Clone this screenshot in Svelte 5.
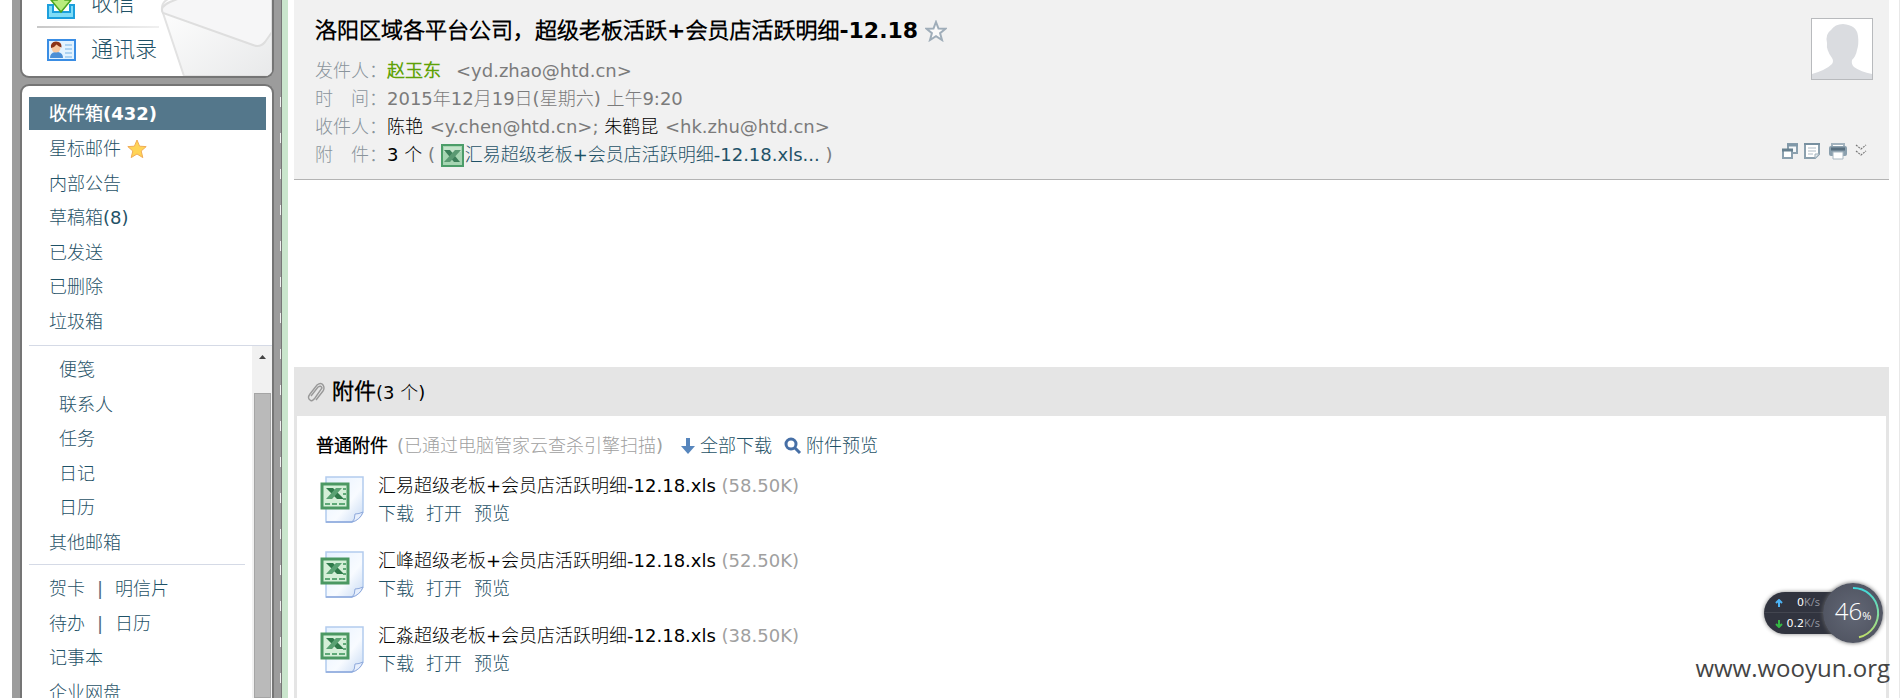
<script>
    let folders = ['星标邮件', '内部公告', '草稿箱(8)', '已发送', '已删除', '垃圾箱'];
    let subFolders = ['便笺', '联系人', '任务', '日记', '日历'];
    let tools = [['贺卡', '明信片'], ['待办', '日历'], ['记事本'], ['企业网盘']];
    let files = [
        { name: '汇易超级老板+会员店活跃明细-12.18.xls', size: '58.50K' },
        { name: '汇峰超级老板+会员店活跃明细-12.18.xls', size: '52.50K' },
        { name: '汇淼超级老板+会员店活跃明细-12.18.xls', size: '38.50K' }
    ];
</script>

<div class="page">
    <aside class="sidebar">
        <nav class="panel quick">
            <svg class="envelope" width="116" height="78" viewBox="0 0 116 78" aria-hidden="true">
                <defs>
                    <linearGradient id="paper" x1="0" y1="0" x2="1" y2="1">
                        <stop offset="0" stop-color="#fff" />
                        <stop offset="1" stop-color="#e8e9ea" />
                    </linearGradient>
                </defs>
                <path d="M6 12 L28 78 H116 V0 H14 Q5 4 6 12Z" fill="url(#paper)" stroke="#e2e2e2" stroke-width="2" />
                <path d="M7 15 Q3 9 14 4 L24 0 H116 V34 L109 44 Q104 50 97 47Z" fill="#f6f6f7" stroke="#dedede" stroke-width="2" />
            </svg>
            <a href="#receive">
                <svg width="30" height="34" viewBox="0 0 30 34" aria-hidden="true">
                    <path d="M2 18h5v7h17v-7h4v13H2z" fill="#7fdcf7" stroke="#1c9fdc" stroke-width="2" />
                    <path d="M11 3h8v10h6L15 25 5 13h6z" fill="#b9ec7c" stroke="#4ba51f" stroke-width="1.5" />
                </svg>
                <span>收信</span>
            </a>
            <div class="fade-line"></div>
            <a href="#contacts">
                <svg width="30" height="24" viewBox="0 0 30 24" aria-hidden="true">
                    <rect x="2" y="2" width="27" height="20" fill="#e3f3ff" stroke="#3a8de4" stroke-width="2" />
                    <path d="M4 20q0-5 5-6h3q5 1 5 6z" fill="#4b8fd6" />
                    <circle cx="10" cy="10" r="4.5" fill="#f8c9a0" />
                    <path d="M5 10q-1-6 5-6.500q6 0 5.500 6q-3-1-5-3q-2 3-5.500 3.500z" fill="#8c3417" />
                    <path d="M19 7h7M19 11h7M19 15h7M19 19h7" stroke="#9cc9ee" stroke-width="1.500" />
                </svg>
                <span>通讯录</span>
            </a>
        </nav>

        <nav class="panel folders">
            <a class="inbox" href="#inbox">收件箱(432)</a>
            <ul>
                {#each folders as folder, i}
                    <li>
                        <a href="#folder">{folder}</a>
                        {#if i == 0}
                            <svg width="20" height="20" viewBox="0 0 20 20" aria-hidden="true">
                                <path d="M10 1l2.600 6.200 6.600.4-5 4.400 1.600 6.600L10 15 4.200 18.600l1.600-6.600-5-4.400 6.600-.4z" fill="#ffd456" stroke="#f0ac56" />
                            </svg>
                        {/if}
                    </li>
                {/each}
            </ul>
            <div class="scroller">
                <div class="scroll-content">
                    <ul>
                        {#each subFolders as folder}
                            <li class="indent"><a href="#folder">{folder}</a></li>
                        {/each}
                        <li><a href="#other">其他邮箱</a></li>
                    </ul>
                    <ul class="tools">
                        {#each tools as row}
                            <li>
                                {#each row as tool, i}
                                    {#if i > 0}<span class="bar">|</span>{/if}<a href="#tool">{tool}</a>
                                {/each}
                            </li>
                        {/each}
                    </ul>
                </div>
                <div class="scrollbar">
                    <svg width="7" height="4" viewBox="0 0 7 4" aria-hidden="true"><path d="M0 4L3.500 0 7 4z" fill="#444" /></svg>
                    <div class="thumb"></div>
                </div>
            </div>
        </nav>
    </aside>

    <main>
        <header>
            <div class="info">
                <h1>
                    洛阳区域各平台公司，超级老板活跃+会员店活跃明细-12.18
                    <svg width="22" height="22" viewBox="0 0 22 22" aria-hidden="true">
                        <path d="M11 2l2.500 6.500 7 .3-5.400 4.400 1.900 6.800L11 16.200 5 20l1.900-6.800L1.500 8.800l7-.3z" fill="#fafafa" stroke="#9fadb9" stroke-width="2" />
                    </svg>
                </h1>
                <dl>
                    <dt>发件人：</dt>
                    <dd><b class="sender">赵玉东</b>&lt;yd.zhao@htd.cn&gt;</dd>
                    <dt>时　间：</dt>
                    <dd>2015年12月19日(星期六) 上午9:20</dd>
                    <dt>收件人：</dt>
                    <dd><span class="dark name">陈艳</span> &lt;y.chen@htd.cn&gt;; <span class="dark name">朱鹤昆</span> &lt;hk.zhu@htd.cn&gt;</dd>
                    <dt>附　件：</dt>
                    <dd>
                        <span class="dark">3 个</span> (
                        <a class="attach" href="#attachments"><svg width="24" height="24" viewBox="0 0 24 24" aria-hidden="true">
                            <rect x="1" y="1" width="21" height="21" fill="#a6d5b2" stroke="#4c9d69" stroke-width="2" />
                            <path d="M3 3h17v5H3z" fill="#c3e3ca" />
                            <path d="M3 6h6l10 12h-6z" fill="#3d7f5a" />
                            <path d="M14 6h6L9 18H3z" fill="#5b9a73" />
                        </svg>汇易超级老板+会员店活跃明细-12.18.xls...</a> )
                    </dd>
                </dl>
            </div>
            <div class="side">
                <svg class="avatar" viewBox="0 0 60 60" role="img" aria-label="头像">
                    <path d="M0 60v-5q14-4 20-10 2-3 0-6-6-8-5-15-2-9 4-13 4-6 12-6 14 1 15 12 1 8-1 14-1 6-5 10-1 4 2 7 7 5 18 7v5z" fill="#dadce0" />
                </svg>
                <div class="actions">
                    <button aria-label="新窗口打开">
                        <svg width="18" height="18" viewBox="0 0 18 18">
                            <path d="M7 2h9v9H7z" fill="#f4f7f9" stroke="#8ba0ae" stroke-width="2" />
                            <path d="M6 3h11" stroke="#8098a8" stroke-width="3" />
                            <path d="M2 8h9v8H2z" fill="#fff" stroke="#8ba0ae" stroke-width="2" />
                            <path d="M1 8h11" stroke="#67808f" stroke-width="3" />
                        </svg>
                    </button>
                    <button aria-label="添加备注">
                        <svg width="18" height="18" viewBox="0 0 18 18">
                            <path d="M2 2h14v10l-4 4H2z" fill="#fff" stroke="#8ba0ae" stroke-width="2" />
                            <path d="M1 2h16" stroke="#7890a0" stroke-width="2" />
                            <path d="M5 6h8M5 9h8M5 12h5" stroke="#aebbc5" />
                            <path d="M12 16v-4h4" fill="#e5ebef" stroke="#a0b0bb" />
                        </svg>
                    </button>
                    <button class="print" aria-label="打印">
                        <svg width="20" height="18" viewBox="0 0 20 18">
                            <path d="M4 4V2h12v2" fill="#fff" stroke="#a3b3be" stroke-width="2" />
                            <rect x="1" y="4" width="18" height="10" rx="2" fill="#8ba0ae" />
                            <path d="M3 7h14" stroke="#586f7f" stroke-width="3" />
                            <path d="M5 10h10v7H5z" fill="#fff" stroke="#a8b7c1" />
                        </svg>
                    </button>
                    <button class="more" aria-label="更多">
                        <svg width="12" height="14" viewBox="0 0 12 14">
                            <path d="M1 1l5 4 5-4M1 7l5 4 5-4" fill="none" stroke="#777" stroke-width="1.200" stroke-dasharray="2 1" />
                        </svg>
                    </button>
                </div>
            </div>
        </header>

        <section>
            <h2>
                <svg width="18" height="22" viewBox="0 0 18 22" aria-hidden="true">
                    <path d="M4 14L11 5q3-2 4 1l-7 10q-3 4-5 2-3-2 0-6L10 3q4-3 6 0 2 3 0 6l-7 9" fill="none" stroke="#999" stroke-width="1.400" />
                </svg>
                <span>附件<small>(3 个)</small></span>
            </h2>
            <div class="body">
                <div class="summary">
                    <b>普通附件</b>
                    <span class="scan">(已通过电脑管家云查杀引擎扫描)</span>
                    <a class="all" href="#download">
                        <svg width="16" height="18" viewBox="0 0 16 18" aria-hidden="true"><path d="M6 1h4v8h5l-7 8-7-8h5z" fill="#5786bd" /></svg>全部下载</a>
                    <a href="#preview">
                        <svg width="18" height="18" viewBox="0 0 18 18" aria-hidden="true">
                            <circle cx="7" cy="7" r="5" fill="none" stroke="#466fa6" stroke-width="3" />
                            <path d="M11 11l5 5" stroke="#466fa6" stroke-width="3" />
                        </svg>附件预览</a>
                </div>
                {#each files as file}
                    <div class="file">
                        <svg width="46" height="48" viewBox="0 0 46 48" aria-hidden="true">
                            <defs>
                                <linearGradient id="sheet" x1="0" y1="0" x2="1" y2="1">
                                    <stop offset="0" stop-color="#e6f1ff" />
                                    <stop offset=".6" stop-color="#f8fbff" />
                                    <stop offset="1" stop-color="#c6d9f3" />
                                </linearGradient>
                            </defs>
                            <path d="M7 1h37v35q-3 7-11 10H7z" fill="url(#sheet)" stroke="#b3cbee" stroke-width="1.500" />
                            <path d="M7 46h26q3-2 3-8 4 0 8-2-3 8-11 10z" fill="#e7effc" stroke="#8ea9dc" />
                            <rect x="3" y="8" width="26" height="24" fill="#d5efd8" stroke="#4b9862" stroke-width="3" />
                            <path d="M7 12h7l11 11h-7z" fill="#2f7a4a" />
                            <path d="M17 12h6L13 23H7z" fill="#5aa273" />
                            <path d="M24 13h3M24 18h3M24 23h3M6 28h5M13 28h5M20 28h6" stroke="#5fa977" stroke-width="2" />
                        </svg>
                        <div>
                            <p>{file.name} <span class="size">({file.size})</span></p>
                            <p class="links"><a href="#download">下载</a><a href="#open">打开</a><a href="#preview">预览</a></p>
                        </div>
                    </div>
                {/each}
            </div>
        </section>
    </main>

    <div class="monitor">
        <div class="speeds">
            <div class="speed">
                <svg width="8" height="8" viewBox="0 0 8 8" aria-hidden="true"><path d="M4 8V2M1 4l3-3 3 3" fill="none" stroke="#4db4f5" stroke-width="2" /></svg>
                <span>0<i>K/s</i></span>
            </div>
            <div class="speed">
                <svg width="8" height="8" viewBox="0 0 8 8" aria-hidden="true"><path d="M4 0v6M1 4l3 3 3-3" fill="none" stroke="#35b944" stroke-width="2" /></svg>
                <span>0.2<i>K/s</i></span>
            </div>
        </div>
        <div class="dial">
            <svg width="60" height="60" viewBox="0 0 60 60" aria-hidden="true">
                <defs>
                    <linearGradient id="arc" x1="0" y1="0" x2="0" y2="1">
                        <stop offset="0" stop-color="#3fd9dc" />
                        <stop offset="1" stop-color="#bfe06a" />
                    </linearGradient>
                </defs>
                <path d="M30 5A25 25 0 0 1 36 54.300" fill="none" stroke="url(#arc)" stroke-width="2" />
            </svg>
            <span>46<small>%</small></span>
        </div>
    </div>
    <div class="watermark">www.wooyun.org</div>
</div>

<style>
    :global(body) {
        margin: 0;
        background: #fff;
    }

    .page {
        position: relative;
        box-sizing: border-box;
        display: flex;
        height: 100vh;
        overflow: hidden;
        padding: 0 10px 0 12px;
        border-right: 1px solid #e8e8e8;
        font-family: "DejaVu Sans", "Noto Sans CJK SC Light", "Noto Sans CJK SC", sans-serif;
        font-size: 18px;
        line-height: 28px;
        color: #000;
    }

    a {
        color: #1f5267;
        text-decoration: none;
    }

    ul,
    dl,
    dd,
    p,
    h1,
    h2 {
        margin: 0;
        padding: 0;
        list-style: none;
    }

    svg {
        flex: none;
    }

    /* left column */
    .sidebar {
        flex: none;
        box-sizing: border-box;
        width: 276px;
        display: flex;
        flex-direction: column;
        gap: 6px;
        padding: 0 8px;
        border-right: 6px solid #cae6cd;
        background:
            repeating-linear-gradient(#eee 0 10px, #9c9c9c 10px 36px) 268px 97px / 1px 100% no-repeat,
            linear-gradient(#777, #777) 269px 0 / 1px 100% no-repeat,
            #9c9c9c;
    }

    .panel {
        box-sizing: border-box;
        border: 2px solid #757575;
        border-radius: 9px;
        background: #fff;
        overflow: hidden;
    }

    .quick {
        position: relative;
        flex: none;
        height: 78px;
        border-top: 0;
        border-radius: 0 0 9px 9px;
        display: flex;
        flex-direction: column;
        justify-content: flex-end;
        padding: 0 0 4px 24px;
    }

    .quick a {
        position: relative;
        flex: none;
        display: flex;
        align-items: center;
        gap: 15px;
        height: 44px;
        font-size: 22px;
    }

    .envelope {
        position: absolute;
        right: 0;
        bottom: 0;
    }

    .fade-line {
        position: relative;
        flex: none;
        width: 122px;
        height: 2px;
        margin-left: -9px;
        background: linear-gradient(90deg, #c8c8c8, #f0f0f0);
    }

    .folders {
        flex: 1;
        min-height: 0;
        display: flex;
        flex-direction: column;
        border-bottom: 0;
        border-radius: 9px 9px 0 0;
        padding: 11px 0 0 7px;
    }

    .inbox {
        flex: none;
        height: 33px;
        margin: 0 6px 0 0;
        padding-left: 20px;
        background: #54778b;
        color: #fff;
        font-weight: bold;
        line-height: 34px;
    }

    .folders ul {
        flex: none;
        display: grid;
        grid-auto-rows: 1fr;
        height: 207px;
        padding-top: 2px;
    }

    .folders li {
        display: flex;
        align-items: center;
        padding-left: 20px;
    }

    .folders li svg {
        margin-left: 6px;
    }

    .folders .indent {
        padding-left: 30px;
    }

    .scroller {
        flex: 1;
        min-height: 0;
        display: flex;
        gap: 7px;
        margin-top: 6px;
        border-top: 1px solid #d5dae6;
    }

    .scroll-content {
        flex: 1;
        overflow: hidden;
        padding-top: 5px;
    }

    .folders .tools {
        height: 138px;
        margin-top: 4px;
        padding-top: 7px;
        border-top: 1px solid #d5dae6;
    }

    .bar {
        padding: 0 12px;
        color: #4f6b80;
    }

    .scrollbar {
        display: flex;
        flex-direction: column;
        align-items: center;
        width: 20px;
        padding-top: 9px;
        background: #f1f1f1;
    }

    .thumb {
        flex: 1;
        width: 15px;
        margin-top: 34px;
        border: 1px solid #a5a5a5;
        background: #bababa;
    }

    /* message */
    main {
        flex: 1;
        min-width: 0;
        display: flex;
        flex-direction: column;
        padding-left: 6px;
    }

    header {
        display: flex;
        justify-content: space-between;
        padding: 6px 16px 10px 21px;
        border-bottom: 1px solid #b4b4b4;
        background: #f1f1f1;
    }

    h1 {
        display: flex;
        align-items: center;
        gap: 7px;
        font-size: 22px;
        line-height: 50px;
    }

    dl {
        display: grid;
        grid-template-columns: 72px auto;
        padding-top: 1px;
        color: #7b7b7b;
    }

    dt {
        color: #8a949c;
        white-space: nowrap;
    }

    .sender {
        margin-right: 15px;
        color: #5fa207;
    }

    .dark {
        color: #000;
    }

    .name {
        margin-right: 1px;
    }

    .attach svg {
        vertical-align: middle;
    }

    .side {
        display: flex;
        flex-direction: column;
        align-items: flex-end;
        justify-content: space-between;
        padding: 12px 0 9px;
    }

    .avatar {
        width: 60px;
        height: 60px;
        border: 1px solid #b8babd;
        background: #fff;
    }

    .actions {
        display: flex;
        align-items: center;
        gap: 4px;
        padding-right: 6px;
    }

    button {
        display: flex;
        padding: 0;
        border: 0;
        background: none;
        cursor: pointer;
    }

    .print {
        margin: 0 3px;
    }

    /* attachments */
    section {
        flex: 1;
        display: flex;
        flex-direction: column;
        margin-top: 187px;
    }

    h2 {
        display: flex;
        align-items: center;
        gap: 7px;
        padding: 2px 13px 0;
        background: #e5e5e5;
        font-size: 22px;
        line-height: 46px;
    }

    h2 small {
        font-size: 18px;
        font-weight: normal;
    }

    .body {
        flex: 1;
        padding: 14px 19px 0;
        border: solid #e5e5e5;
        border-width: 0 3px;
    }

    .summary {
        display: flex;
        gap: 9px;
        margin-bottom: 10px;
        line-height: 32px;
    }

    .summary a {
        display: flex;
        align-items: center;
        gap: 4px;
    }

    .summary .all {
        margin: 0 3px 0 8px;
    }

    .scan,
    .size {
        color: #a0a0a0;
    }

    .file {
        display: flex;
        gap: 13px;
        height: 75px;
        padding-left: 3px;
    }

    .file svg {
        margin-top: 4px;
    }

    .links {
        display: flex;
        gap: 12px;
    }

    /* desktop widget floating over the page */
    .monitor {
        position: absolute;
        right: 16px;
        bottom: 55px;
        display: flex;
        align-items: center;
        color: #fff;
    }

    .speeds {
        width: 74px;
        margin-right: -15px;
        border-radius: 21px 0 0 21px;
        background: #31343f;
        box-shadow: 0 0 4px #888;
    }

    .speed {
        display: flex;
        align-items: center;
        justify-content: space-between;
        height: 21px;
        padding: 0 18px 0 11px;
        font-size: 11px;
        line-height: 20px;
    }

    .speed + .speed {
        box-shadow: 0 -1px #434650;
    }

    .speed i {
        color: #9699a3;
        font-family: "Open Sans", sans-serif;
        font-style: normal;
    }

    .dial {
        position: relative;
        display: flex;
        align-items: center;
        justify-content: center;
        width: 60px;
        height: 60px;
        border-radius: 50%;
        background: radial-gradient(#626775, #4b4f5c);
        box-shadow: 0 0 4px #666;
        font-family: "Open Sans", sans-serif;
        font-size: 24px;
        font-weight: 300;
    }

    .dial svg {
        position: absolute;
        inset: 0;
    }

    .dial small {
        font-size: 11px;
        font-weight: normal;
    }

    .watermark {
        position: absolute;
        right: 9px;
        bottom: 16px;
        color: #444;
        font-family: "Open Sans", sans-serif;
        font-size: 24px;
    }
</style>
